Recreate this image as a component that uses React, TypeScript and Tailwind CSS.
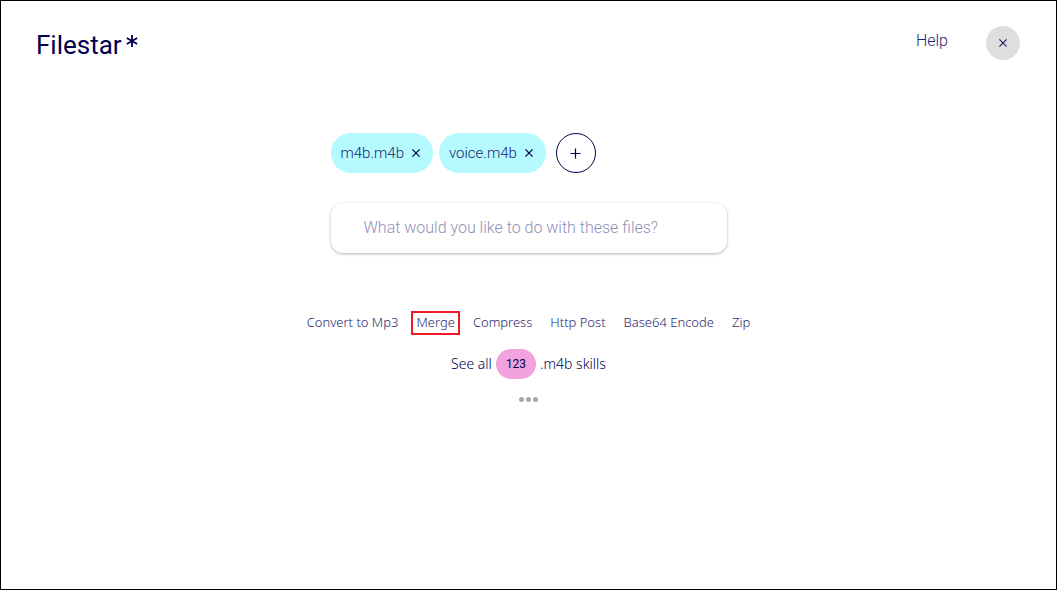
import * as React from "react";
import { clsx } from "clsx";

interface FileChipProps {
  /** File name shown in the chip */
  name: string;
  onRemove: () => void;
}

interface Skill {
  label: string;
  highlighted?: boolean;
}

const skills: Skill[] = [
  { label: "Convert to Mp3" },
  { label: "Merge", highlighted: true },
  { label: "Compress" },
  { label: "Http Post" },
  { label: "Base64 Encode" },
  { label: "Zip" },
];

const CrossIcon = () => (
  <svg viewBox="0 0 8 8" className="h-2 w-2" fill="none" stroke="currentColor" strokeWidth="1.2" aria-hidden="true">
    <path d="M0.4 0.4 7.6 7.6M7.6 0.4 0.4 7.6" />
  </svg>
);

const PlusIcon = () => (
  <svg viewBox="0 0 11 11" className="h-[11px] w-[11px]" fill="none" stroke="currentColor" strokeWidth="1.2" aria-hidden="true">
    <path d="M5.5 0.5V10.5M0.5 5.5H10.5" />
  </svg>
);

const Logo = () => (
  <a href="#" aria-label="Filestar" className="flex items-start gap-1 pt-1 text-[#00004f]">
    <span className="font-['Roboto'] text-[26px] leading-9 font-normal">Filestar</span>
    <svg viewBox="0 0 12 12" className="mt-2 h-3 w-3" fill="none" stroke="currentColor" strokeWidth="1.8" aria-hidden="true">
      <path d="M6 0V12M0.8 3 11.2 9M11.2 3 0.8 9" />
    </svg>
  </a>
);

const FileChip = ({ name, onRemove }: FileChipProps) => (
  <li className="flex h-10 items-center gap-2 rounded-[20px] bg-[#b5faff] pr-[13px] pl-[10px]">
    <span className="text-[15px] leading-5">{name}</span>
    <button type="button" aria-label={`Remove ${name}`} onClick={onRemove} className="text-[#00004f]">
      <CrossIcon />
    </button>
  </li>
);

export default function App() {
  const [files, setFiles] = React.useState(["m4b.m4b", "voice.m4b"]);

  return (
    <div className="min-h-screen border border-black bg-white font-['Roboto',sans-serif] font-light text-[#1f1f70]">
      <header className="flex items-center justify-between pt-[22px] pr-9 pl-[35px]">
        <Logo />
        <nav className="flex items-center gap-[38px]">
          <a href="#" className="pb-1 text-base leading-6">Help</a>
          <button type="button" aria-label="Close" className="flex h-[34px] w-[34px] items-center justify-center rounded-full bg-[#dedede]">
            <CrossIcon />
          </button>
        </nav>
      </header>

      <main className="flex flex-col items-center pt-[70px]">
        <div className="w-full max-w-[396px]">
          <div className="flex items-center gap-[10px]">
            <ul className="flex gap-[6px]">
              {files.map((file) => (
                <FileChip key={file} name={file} onRemove={() => setFiles(files.filter((f) => f !== file))} />
              ))}
            </ul>
            <button type="button" aria-label="Add file" className="flex h-10 w-10 items-center justify-center rounded-full border border-[#00004f] text-[#00004f]">
              <PlusIcon />
            </button>
          </div>

          <input
            type="text"
            aria-label="What would you like to do with these files?"
            placeholder="What would you like to do with these files?"
            className="mt-[30px] h-[50px] w-full rounded-xl px-[33px] pb-[2px] text-base shadow-[0_1px_3px_rgba(0,0,0,0.3)] outline-none placeholder:text-[#8f8fb7]"
          />
        </div>

        <ul className="mt-[58px] flex items-center gap-2 font-['Noto_Sans',sans-serif] text-[13px]">
          {skills.map(({ label, highlighted }) => (
            <li key={label}>
              <a
                href="#"
                className={clsx(
                  "flex h-6 items-center border-2 px-[3px]",
                  highlighted ? "border-[#ed1c24]" : "border-transparent"
                )}
              >
                {label}
              </a>
            </li>
          ))}
        </ul>

        <a href="#" className="mt-[14px] flex items-center gap-1 font-['Noto_Sans',sans-serif] text-sm text-[#00004f]">
          See all
          <span className="flex h-[30px] items-center rounded-[15px] bg-[#f1a2df] px-[10px] font-['Roboto',sans-serif] text-xs font-normal">
            123
          </span>
          .m4b skills
        </a>

        <button type="button" aria-label="More" className="mt-[18px] flex gap-[2px]">
          <span className="h-[5px] w-[5px] rounded-full bg-[#a6a6a6]" />
          <span className="h-[5px] w-[5px] rounded-full bg-[#a6a6a6]" />
          <span className="h-[5px] w-[5px] rounded-full bg-[#a6a6a6]" />
        </button>
      </main>
    </div>
  );
}
